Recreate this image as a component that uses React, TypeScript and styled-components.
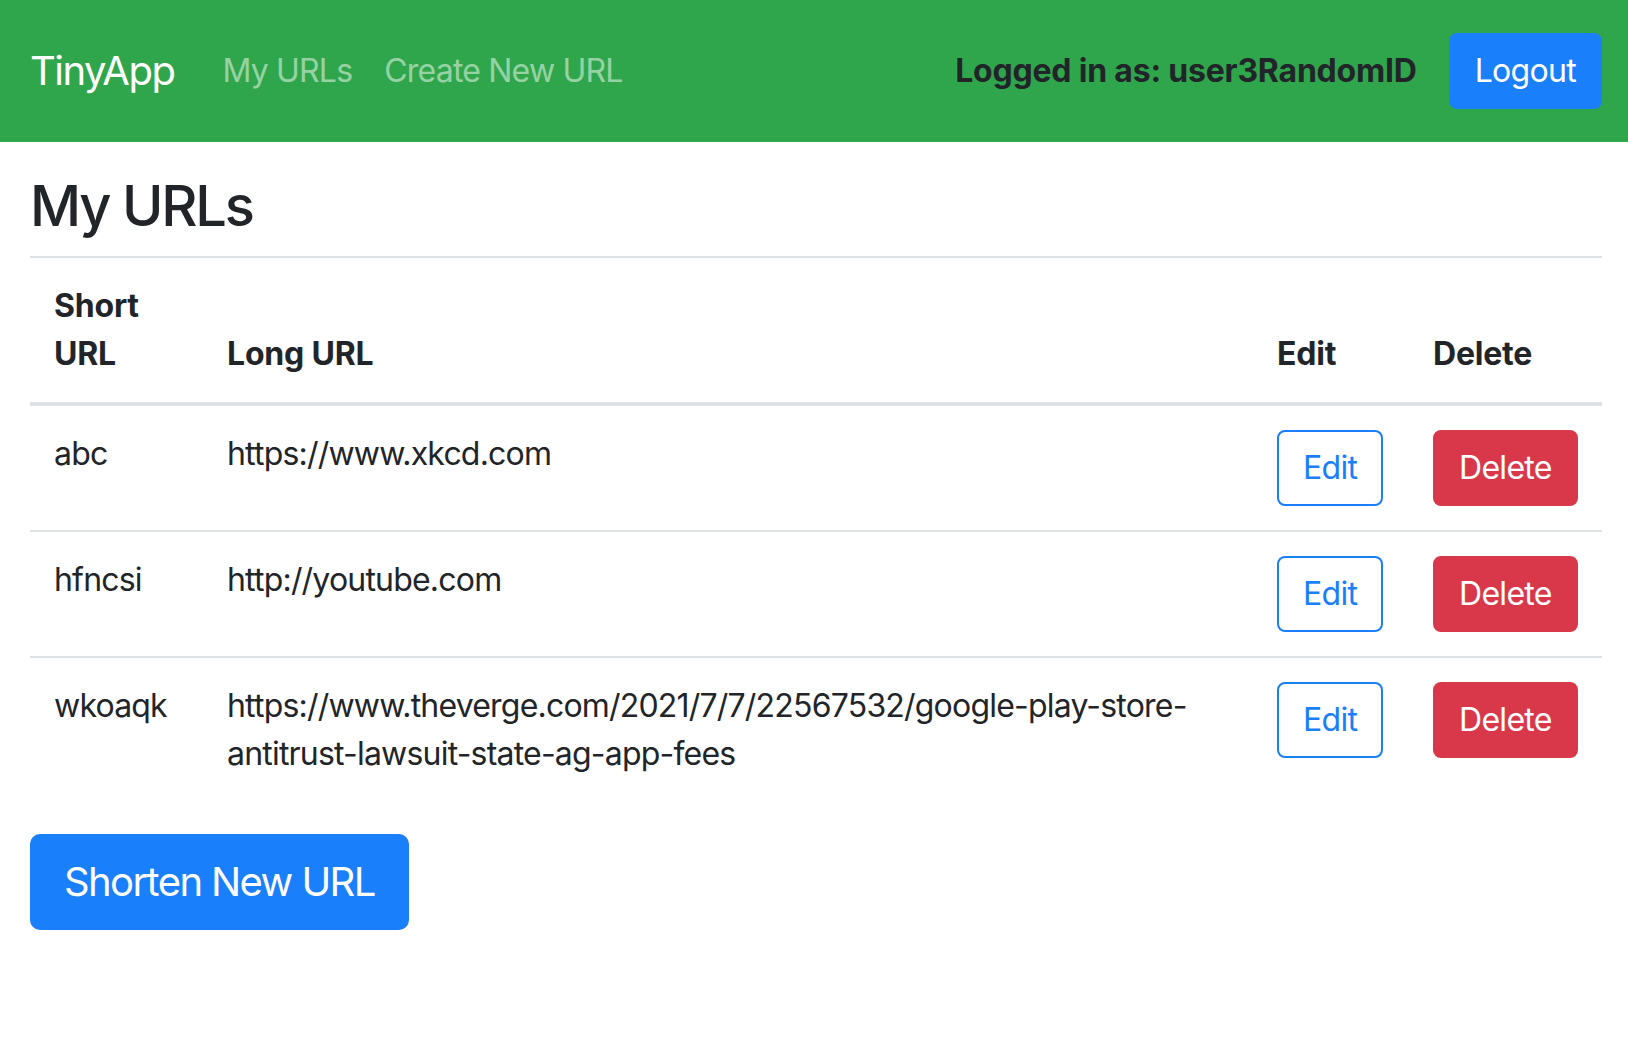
import React from "react";
import styled, { createGlobalStyle, css } from "styled-components";

const GlobalStyle = createGlobalStyle`
  *, *::before, *::after { box-sizing: border-box; }
  html, body { margin: 0; padding: 0; background: #ffffff; }
  body {
    font-family: Inter, "Liberation Sans", sans-serif;
    font-size: 32px;
    line-height: 1.5;
    letter-spacing: -0.8px;
    color: #212529;
  }
`;

const Navbar = styled.header`
  display: flex;
  align-items: center;
  height: 142px;
  padding: 0 26px 0 30px;
  background: #2fa64c;
`;

const Brand = styled.a`
  font-size: 40px;
  line-height: 60px;
  letter-spacing: -1.5px;
  color: #ffffff;
  text-decoration: none;
  margin-right: 32px;
`;

const NavList = styled.nav`
  display: flex;
  align-items: center;
`;

const NavLink = styled.a`
  padding: 0 16px;
  font-size: 32px;
  line-height: 48px;
  color: rgba(255, 255, 255, 0.5);
  text-decoration: none;
`;

const UserArea = styled.div`
  margin-left: auto;
  display: flex;
  align-items: center;
`;

const UserLabel = styled.span`
  font-weight: 700;
  font-size: 32px;
  letter-spacing: -0.2px;
  color: #212529;
  margin-right: 32px;
`;

type Variant = "primary" | "outline" | "danger";

const Button = styled.button<{ $variant: Variant; $lg?: boolean }>`
  display: inline-block;
  font-family: inherit;
  font-weight: 400;
  font-size: 32px;
  line-height: 48px;
  letter-spacing: -0.7px;
  padding: 12px 24px;
  border: 2px solid transparent;
  border-radius: 8px;
  cursor: pointer;
  ${({ $variant }) =>
    $variant === "primary"
      ? css`
          background: #1a7ffb;
          border-color: #1a7ffb;
          color: #ffffff;
        `
      : $variant === "danger"
      ? css`
          background: #d9384a;
          border-color: #d9384a;
          color: #ffffff;
        `
      : css`
          background: #ffffff;
          border-color: #1a7ffb;
          color: #1a7ffb;
        `}
  ${({ $lg }) =>
    $lg &&
    css`
      font-size: 40px;
      line-height: 60px;
      letter-spacing: -1.6px;
      padding: 16px 32px;
      border-radius: 10px;
    `}
`;

const Main = styled.main`
  padding: 31px 26px 0 30px;
`;

const Title = styled.h3`
  margin: 0 0 16px;
  font-size: 56px;
  font-weight: 500;
  line-height: 1.2;
  letter-spacing: -2.2px;
  color: #212529;
`;

const Table = styled.table`
  width: 100%;
  border-collapse: collapse;
  table-layout: fixed;
  margin-bottom: 32px;
`;

const HeadCell = styled.th<{ $width?: number }>`
  width: ${({ $width }) => ($width ? `${$width}px` : "auto")};
  padding: 24px;
  text-align: left;
  vertical-align: bottom;
  font-weight: 700;
  letter-spacing: -0.2px;
  border-top: 2px solid #dee2e6;
  border-bottom: 4px solid #dee2e6;
`;

const Cell = styled.td`
  padding: 24px;
  vertical-align: top;
  border-top: 2px solid #dee2e6;
  word-wrap: break-word;
`;

const urls = [
  { short: "abc", long: "https://www.xkcd.com" },
  { short: "hfncsi", long: "http://youtube.com" },
  {
    short: "wkoaqk",
    long: "https://www.theverge.com/2021/7/7/22567532/google-play-store-antitrust-lawsuit-state-ag-app-fees",
  },
];

export default function App() {
  return (
    <>
      <GlobalStyle />
      <Navbar>
        <Brand href="#">TinyApp</Brand>
        <NavList>
          <NavLink href="#">My URLs</NavLink>
          <NavLink href="#">Create New URL</NavLink>
        </NavList>
        <UserArea>
          <UserLabel>Logged in as: user3RandomID</UserLabel>
          <Button $variant="primary">Logout</Button>
        </UserArea>
      </Navbar>
      <Main>
        <Title>My URLs</Title>
        <Table>
          <thead>
            <tr>
              <HeadCell $width={173}>Short URL</HeadCell>
              <HeadCell>Long URL</HeadCell>
              <HeadCell $width={156}>Edit</HeadCell>
              <HeadCell $width={193}>Delete</HeadCell>
            </tr>
          </thead>
          <tbody>
            {urls.map((u) => (
              <tr key={u.short}>
                <Cell>{u.short}</Cell>
                <Cell>{u.long}</Cell>
                <Cell>
                  <Button $variant="outline">Edit</Button>
                </Cell>
                <Cell>
                  <Button $variant="danger">Delete</Button>
                </Cell>
              </tr>
            ))}
          </tbody>
        </Table>
        <Button $variant="primary" $lg>
          Shorten New URL
        </Button>
      </Main>
    </>
  );
}
